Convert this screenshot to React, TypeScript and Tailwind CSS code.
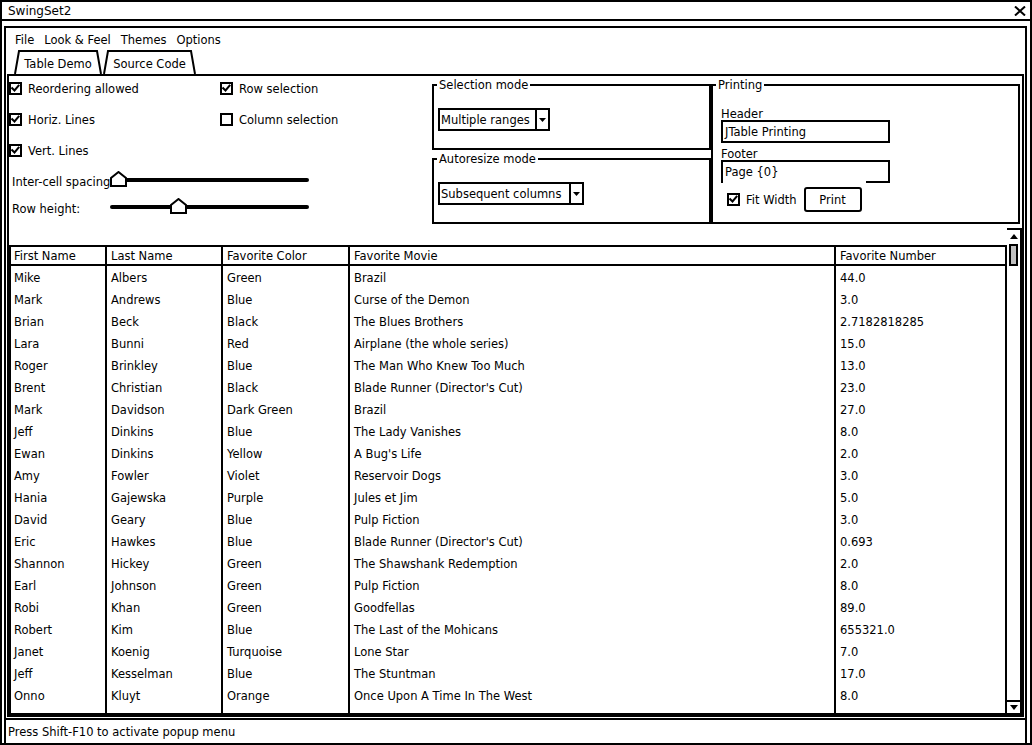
import React from 'react'

type Row = [string, string, string, string, string]

const rows: Row[] = [
  ['Mike', 'Albers', 'Green', 'Brazil', '44.0'],
  ['Mark', 'Andrews', 'Blue', 'Curse of the Demon', '3.0'],
  ['Brian', 'Beck', 'Black', 'The Blues Brothers', '2.7182818285'],
  ['Lara', 'Bunni', 'Red', 'Airplane (the whole series)', '15.0'],
  ['Roger', 'Brinkley', 'Blue', 'The Man Who Knew Too Much', '13.0'],
  ['Brent', 'Christian', 'Black', "Blade Runner (Director's Cut)", '23.0'],
  ['Mark', 'Davidson', 'Dark Green', 'Brazil', '27.0'],
  ['Jeff', 'Dinkins', 'Blue', 'The Lady Vanishes', '8.0'],
  ['Ewan', 'Dinkins', 'Yellow', "A Bug's Life", '2.0'],
  ['Amy', 'Fowler', 'Violet', 'Reservoir Dogs', '3.0'],
  ['Hania', 'Gajewska', 'Purple', 'Jules et Jim', '5.0'],
  ['David', 'Geary', 'Blue', 'Pulp Fiction', '3.0'],
  ['Eric', 'Hawkes', 'Blue', "Blade Runner (Director's Cut)", '0.693'],
  ['Shannon', 'Hickey', 'Green', 'The Shawshank Redemption', '2.0'],
  ['Earl', 'Johnson', 'Green', 'Pulp Fiction', '8.0'],
  ['Robi', 'Khan', 'Green', 'Goodfellas', '89.0'],
  ['Robert', 'Kim', 'Blue', 'The Last of the Mohicans', '655321.0'],
  ['Janet', 'Koenig', 'Turquoise', 'Lone Star', '7.0'],
  ['Jeff', 'Kesselman', 'Blue', 'The Stuntman', '17.0'],
  ['Onno', 'Kluyt', 'Orange', 'Once Upon A Time In The West', '8.0'],
]

const headers = ['First Name', 'Last Name', 'Favorite Color', 'Favorite Movie', 'Favorite Number']
const cols = 'grid grid-cols-[96px_116px_127px_486px_171px]'

function Check({ on }: { on: boolean }) {
  return (
    <span className="w-[13px] h-[13px] border-2 border-black bg-white flex shrink-0">
      {on && (
        <svg width="9" height="9" viewBox="0 0 9 9">
          <path d="M0.5 3.5 L3.5 6.5 L8.2 0.8" fill="none" stroke="black" strokeWidth="2" />
        </svg>
      )}
    </span>
  )
}

function CheckLabel({ on, label }: { on: boolean; label: string }) {
  return (
    <div className="flex items-center gap-[6px] h-[24px]">
      <Check on={on} />
      <span className="pt-[1px]">{label}</span>
    </div>
  )
}

function Slider({ label, thumb }: { label: string; thumb: number }) {
  return (
    <div className="flex items-center h-[21px] pl-[3px]">
      <span className="w-[98px] whitespace-nowrap pt-[1px]">{label}</span>
      <div className="relative w-[199px] h-[21px]">
        <div className="absolute left-0 right-0 top-[7px] h-[4px] rounded-full bg-black" />
        <svg className="absolute top-0" style={{ left: thumb }} width="17" height="16" viewBox="0 0 17 16">
          <polygon points="1,15 1,7 8.5,1 16,7 16,15" fill="white" stroke="black" strokeWidth="2" />
        </svg>
      </div>
    </div>
  )
}

function Combo({ text, cls }: { text: string; cls: string }) {
  return (
    <div className={`flex h-[23px] border-2 border-black bg-white ${cls}`}>
      <span className="flex-1 flex items-center pl-[1px] pt-[1px] whitespace-nowrap">{text}</span>
      <span className="w-[13px] border-l-2 border-black flex items-center justify-center">
        <svg width="7" height="4" viewBox="0 0 7 4">
          <polygon points="0,0 7,0 3.5,4" fill="black" />
        </svg>
      </span>
    </div>
  )
}

function Group({ title, cls, children }: { title: string; cls: string; children: React.ReactNode }) {
  return (
    <fieldset className={`border-2 border-black ${cls}`}>
      <legend className="ml-[3px] px-[2px] leading-[14px]">{title}</legend>
      {children}
    </fieldset>
  )
}

function TabShape({ w, label }: { w: number; label: string }) {
  return (
    <div className="relative h-[24px] flex items-center justify-center pt-[3px]" style={{ width: w }}>
      <svg className="absolute inset-0" width={w} height="24" viewBox={`0 0 ${w} 24`}>
        <polyline points={`1,24 5,1 ${w - 5},1 ${w - 1},24`} stroke="black" strokeWidth="2" fill="white" />
      </svg>
      <span className="relative">{label}</span>
    </div>
  )
}

export default function App() {
  return (
    <div className="w-[1032px] h-[745px] border-2 border-black bg-white text-black flex flex-col font-['DejaVu_Sans',sans-serif] text-[11.5px] leading-[14px] overflow-hidden">
      {/* title bar */}
      <div className="h-[19px] shrink-0 border-b-2 border-black flex items-center justify-between pl-[6px] pr-[4px] text-[12px]">
        <span>SwingSet2</span>
        <svg width="12" height="10" viewBox="0 0 12 10">
          <path d="M1 0.5 L11 9.5 M11 0.5 L1 9.5" stroke="black" strokeWidth="2" />
        </svg>
      </div>

      {/* inner frame */}
      <div className="flex-1 mt-[5px] ml-[2px] mr-[3px] border-l-2 border-t-2 border-r-2 border-black flex flex-col min-h-0">
        <div className="h-[22px] shrink-0 flex items-center gap-[10px] pl-[9px] pt-[1px]">
          <span>File</span>
          <span>Look &amp; Feel</span>
          <span>Themes</span>
          <span>Options</span>
        </div>

        <div className="h-[24px] shrink-0 flex items-end pl-[8px] gap-[1px]">
          <TabShape w={88} label="Table Demo" />
          <TabShape w={93} label="Source Code" />
        </div>

        {/* content panel */}
        <div className="flex-1 mx-[1px] border-2 border-black flex flex-col min-h-0">
          <div className="h-[152px] shrink-0 flex">
            {/* left options */}
            <div className="w-[423px] flex flex-col">
              <div className="grid grid-cols-[211px_1fr] gap-y-[7px]">
                <CheckLabel on label="Reordering allowed" />
                <CheckLabel on label="Row selection" />
                <CheckLabel on label="Horiz. Lines" />
                <CheckLabel on={false} label="Column selection" />
                <CheckLabel on label="Vert. Lines" />
              </div>
              <div className="mt-[9px] flex flex-col gap-[6px]">
                <Slider label="Inter-cell spacing" thumb={0} />
                <Slider label="Row height:" thumb={60} />
              </div>
            </div>

            {/* modes */}
            <div className="w-[279px] pt-[2px] flex flex-col gap-[2px]">
              <Group title="Selection mode" cls="h-[72px]">
                <div className="mt-[16px] ml-[4px]">
                  <Combo text="Multiple ranges" cls="w-[112px]" />
                </div>
              </Group>
              <Group title="Autoresize mode" cls="h-[72px]">
                <div className="mt-[16px] ml-[4px]">
                  <Combo text="Subsequent columns" cls="w-[146px]" />
                </div>
              </Group>
            </div>

            {/* printing */}
            <div className="flex-1 pt-[2px] mr-[2px]">
              <Group title="Printing" cls="h-[146px]">
                <div className="pl-[8px]">
                  <div className="mt-[14px] h-[14px] pt-[1px]">Header</div>
                  <div className="w-[169px] h-[23px] border-2 border-black flex items-center pl-[2px] pt-[1px]">JTable Printing</div>
                  <div className="mt-[3px] h-[14px] pt-[1px]">Footer</div>
                  <div className="w-[169px] h-[23px] border-l-2 border-t-2 border-r-2 border-black flex flex-col">
                    <span className="flex-1 flex items-center pl-[2px] pt-[1px]">Page {'{0}'}</span>
                    <span className="self-end w-[22px] h-[2px] bg-black" />
                  </div>
                  <div className="mt-[4px] flex items-center">
                    <span className="ml-[6px]"><Check on /></span>
                    <span className="ml-[6px] pt-[1px]">Fit Width</span>
                    <span className="ml-[7px] w-[58px] h-[25px] border-2 border-black rounded-[3px] flex items-center justify-center">Print</span>
                  </div>
                </div>
              </Group>
            </div>
          </div>

          {/* table area */}
          <div className="flex-1 flex min-h-0">
            <div className="w-[998px] pt-[17px] flex flex-col">
              <div className="flex-1 border-l-2 border-t-2 border-b-2 border-black flex flex-col min-h-0">
                <div className={`${cols} h-[19px] border-b-2 border-black shrink-0`}>
                  {headers.map((h, j) => (
                    <div key={h} className={`border-r-2 border-black pt-[1px] flex items-center whitespace-nowrap ${j === 0 ? 'pl-[3px]' : 'pl-[4px]'}`}>{h}</div>
                  ))}
                </div>
                {rows.map((r, i) => (
                  <div key={i} className={`${cols} h-[22px] shrink-0`}>
                    {r.map((c, j) => (
                      <div key={j} className={`border-r-2 border-black pt-[1px] flex items-center whitespace-nowrap ${j === 0 ? 'pl-[3px]' : 'pl-[4px]'}`}>{c}</div>
                    ))}
                  </div>
                ))}
                <div className={`${cols} flex-1`}>
                  {headers.map(h => <div key={h} className="border-r-2 border-black" />)}
                </div>
              </div>
            </div>

            {/* scrollbar */}
            <div className="w-[15px] flex flex-col">
              <div className="h-[15px] border-t-2 border-r-2 border-black flex items-center justify-center">
                <svg width="8" height="5" viewBox="0 0 8 5"><polygon points="0,5 8,5 4,0" fill="black" /></svg>
              </div>
              <div className="flex-1 border-r-2 border-black pt-[1px] pl-[2px]">
                <div className="w-[9px] h-[22px] bg-[#c0c0c0] border-2 border-black" />
              </div>
              <div className="h-[15px] border-t-2 border-r-2 border-b-2 border-black flex items-center justify-center">
                <svg width="8" height="5" viewBox="0 0 8 5"><polygon points="0,0 8,0 4,5" fill="black" /></svg>
              </div>
            </div>
          </div>
        </div>

        {/* status bar */}
        <div className="h-[25px] shrink-0 mt-[1px] border-t-2 border-black flex items-center pl-[2px] pt-[1px]">
          Press Shift-F10 to activate popup menu
        </div>
      </div>
    </div>
  )
}
